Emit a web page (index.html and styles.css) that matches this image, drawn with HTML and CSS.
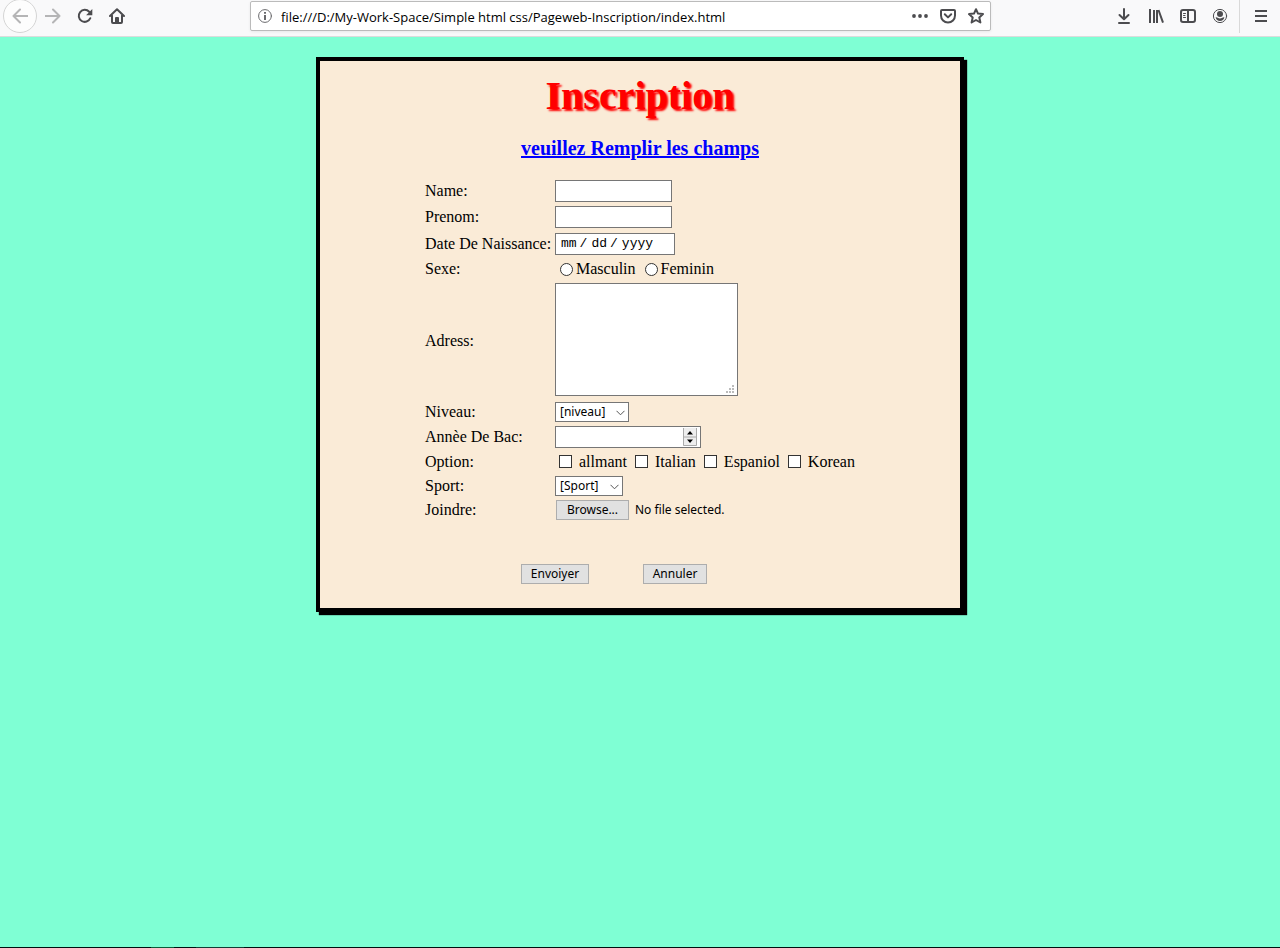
FILE: index.html
```html
<!DOCTYPE html>
<html lang="en">
<head>
<meta charset="utf-8">
<title>Inscription</title>
<link rel="stylesheet" href="styles.css">
</head>
<body>
<header class="toolbar">
  <nav class="nav-group">
    <button class="tool back" type="button" aria-label="Back"><svg width="16" height="16" viewBox="0 0 16 16"><path d="M15.500 8H1.500M8 1.500L1.500 8L8 14.500"/></svg></button>
    <button class="tool faded" type="button" aria-label="Forward"><svg width="16" height="16" viewBox="0 0 16 16"><path d="M.5 8H14.500M8 1.500L14.500 8L8 14.500"/></svg></button>
    <button class="tool" type="button" aria-label="Reload"><svg width="16" height="16" viewBox="0 0 16 16"><path d="M13.300 10.200A6 6 0 1 1 12.200 3.800"/><path class="solid" d="M15.300 1V7.200H9.100Z"/></svg></button>
    <button class="tool" type="button" aria-label="Home"><svg width="16" height="16" viewBox="0 0 16 16"><path d="M1 8L8 1.300L15 8M3 7.500V14Q3 15 4 15H12Q13 15 13 14V7.500"/><path class="solid" d="M6 15V10Q6 9 7 9H9Q10 9 10 10V15Z"/></svg></button>
  </nav>
  <div class="address">
    <svg class="info" width="14" height="14" viewBox="0 0 14 14"><circle cx="7" cy="7" r="6.400"/><path d="M7 6V11M7 3V4.700"/></svg>
    <input class="url" type="text" aria-label="Address" value="file:///D:/My-Work-Space/Simple html css/Pageweb-Inscription/index.html">
    <button class="mini" type="button" aria-label="Page actions"><svg width="16" height="16" viewBox="0 0 16 16"><g class="solid"><circle cx="2" cy="8" r="1.900"/><circle cx="8" cy="8" r="1.900"/><circle cx="14" cy="8" r="1.900"/></g></svg></button>
    <button class="mini" type="button" aria-label="Save to Pocket"><svg width="16" height="16" viewBox="0 0 16 16"><path d="M2 2H14Q15 2 15 3V7.500A7 7 0 0 1 1 7.500V3Q1 2 2 2ZM4.800 6.300L8 9.400L11.200 6.300"/></svg></button>
    <button class="mini" type="button" aria-label="Bookmark"><svg width="16" height="16" viewBox="0 0 16 16"><path d="M8 1.200L10 5.600L15 6.100L11.300 9.500L12.400 14.500L8 12L3.600 14.500L4.700 9.500L1 6.100L6 5.600Z"/></svg></button>
  </div>
  <div class="side-tools">
    <button class="tool" type="button" aria-label="Downloads"><svg width="16" height="16" viewBox="0 0 16 16"><path d="M8 1V11M3.500 7L8 11.300L12.500 7M3 15H13"/></svg></button>
    <button class="tool" type="button" aria-label="Library"><svg class="butt" width="16" height="16" viewBox="0 0 16 16"><path d="M2 1V15M6 2V15M9 2V15M10.500 2L15 14.700"/></svg></button>
    <button class="tool" type="button" aria-label="Sidebars"><svg width="16" height="16" viewBox="0 0 16 16"><rect x="1" y="2" width="14" height="12" rx="2"/><path d="M8 2V14"/><path class="thin" d="M3.500 5.500H5.500M3.500 7.500H5M3.500 9.500H5.500"/></svg></button>
    <button class="tool" type="button" aria-label="Account"><svg width="16" height="16" viewBox="0 0 16 16"><circle class="thin" cx="8" cy="8" r="6.600"/><circle class="solid" cx="8" cy="6" r="3"/><path class="solid" d="M3.600 9.200Q5 9 5.700 9.700Q8 11.200 10.300 9.700Q11 9 12.400 9.200Q11.500 13 8 13Q4.500 13 3.600 9.200Z"/></svg></button>
  </div>
  <div class="menu-zone">
    <button class="tool" type="button" aria-label="Menu"><svg class="butt" width="16" height="16" viewBox="0 0 16 16"><path d="M2 3H14M2 8H14M2 13H14"/></svg></button>
  </div>
</header>
<main class="page">
  <form class="card">
    <h1 class="title">Inscription</h1>
    <h2 class="subtitle">veuillez Remplir les champs</h2>
    <div class="fields">
      <label for="name">Name:</label>
      <div class="cell"><input class="box text" id="name" type="text"></div>
      <label for="prenom">Prenom:</label>
      <div class="cell"><input class="box text" id="prenom" type="text"></div>
      <label for="birth">Date De Naissance:</label>
      <div class="cell"><input class="box date" id="birth" type="date"></div>
      <span>Sexe:</span>
      <div class="cell radios">
        <label class="radio"><input type="radio" name="sexe">Masculin</label>
        <label class="radio"><input type="radio" name="sexe">Feminin</label>
      </div>
      <label for="adress">Adress:</label>
      <div class="cell area-cell"><textarea class="box area" id="adress"></textarea></div>
      <label for="niveau">Niveau:</label>
      <div class="cell"><span class="drop">
        <select class="box select level" id="niveau"><option>[niveau]</option></select>
        <svg class="chevron" width="9" height="6" viewBox="0 0 9 6"><path d="M.5 .8L4.500 4.800L8.500 .8"/></svg></span></div>
      <label for="bac">Annèe De Bac:</label>
      <div class="cell"><span class="drop"><input class="box number" id="bac" type="number">
        <svg class="spin" width="14" height="18" viewBox="0 0 14 18"><path class="spin-bg" d="M0 0H14V18H0Z"/><path class="spin-edge" d="M.5 0V17.500H13.500V0M0 9H14"/><path class="spin-arrow" d="M4 6.500L7 3L10 6.500ZM4 11.500L7 15L10 11.500Z"/></svg></span></div>
      <span>Option:</span>
      <div class="cell checks">
        <label class="check"><input type="checkbox">allmant</label>
        <label class="check"><input type="checkbox">Italian</label>
        <label class="check"><input type="checkbox">Espaniol</label>
        <label class="check"><input type="checkbox">Korean</label>
      </div>
      <label for="sport">Sport:</label>
      <div class="cell"><span class="drop">
        <select class="box select sport" id="sport"><option>[Sport]</option></select>
        <svg class="chevron" width="9" height="6" viewBox="0 0 9 6"><path d="M.5 .8L4.500 4.800L8.500 .8"/></svg></span></div>
      <label for="file">Joindre:</label>
      <div class="cell file"><input class="file-input" id="file" type="file"><label class="button browse" for="file">Browse...</label><span>No file selected.</span></div>
    </div>
    <div class="actions">
      <button class="button send" type="submit">Envoiyer</button>
      <button class="button cancel" type="reset">Annuler</button>
    </div>
  </form>
</main>
<footer class="edge"></footer>
</body>
</html>
```

FILE: styles.css
```css
* { box-sizing: border-box; }
body {
  margin: 0;
  min-height: 100vh;
  display: flex;
  flex-direction: column;
  background: #7fffd4;
  color: #000;
  font: 16px/18px "Liberation Serif", serif;
}
button, input, select, textarea { font: inherit; color: inherit; margin: 0; }

.toolbar {
  display: flex;
  height: 37px;
  background: #f9f9fa;
  border-bottom: 1px solid #dcdcdc;
}
.toolbar svg { fill: none; stroke: #4c4c4f; stroke-width: 2; stroke-linejoin: round; stroke-linecap: round; }
.toolbar .solid { fill: #4c4c4f; stroke: none; }
.toolbar .thin { stroke-width: 1; }
.toolbar .butt { stroke-linecap: butt; }
.nav-group { display: flex; width: 250px; padding-left: 3px; }
.tool {
  display: flex;
  align-items: center;
  justify-content: center;
  width: 32px;
  height: 32px;
  padding: 0;
  border: 0;
  background: none;
}
.back {
  width: 34px;
  height: 34px;
  margin-top: -1px;
  border: 1px solid #d5d5d5;
  border-radius: 50%;
  background: #fdfdfd;
}
.toolbar .back svg, .toolbar .faded svg { stroke: #b5b5b6; }
.address {
  flex: 1;
  display: flex;
  align-items: center;
  gap: 12px;
  height: 30px;
  margin-top: 1px;
  padding: 0 6px 0 7px;
  background: #fff;
  border: 1px solid #bbb;
  border-radius: 2px;
  box-shadow: 0 1px 3px #0001;
}
.toolbar .info { stroke: #6a6a6d; stroke-width: 1; flex: none; }
.info path { stroke-width: 2; stroke-linecap: butt; }
.url {
  flex: 1;
  min-width: 0;
  margin-left: -3px;
  padding: 2px 0 0;
  border: 0;
  font: 13px/20px "Open Sans", sans-serif;
  outline: 0;
}
.mini { display: flex; padding: 0; border: 0; background: none; }
.side-tools { display: flex; margin-left: 117px; }
.menu-zone {
  display: flex;
  width: 41px;
  height: 33px;
  margin-left: 3px;
  padding-left: 5px;
  border-left: 1px solid #d9d9d9;
}

.page { flex: 1; padding: 20px; }
.card {
  width: 100%;
  max-width: 648px;
  margin: 0 auto;
  padding: 13px 24px 24px;
  border: 4px solid #000;
  background: #faebd7;
  box-shadow: 3px 3px 1px #000;
}
.title {
  margin: 0;
  text-align: center;
  color: #f00;
  font-size: 40px;
  line-height: 44px;
  text-shadow: 2px 2px 2px #f00;
}
.subtitle {
  margin: 19px 0 18px;
  text-align: center;
  color: #00f;
  font-size: 20px;
  line-height: 23px;
  text-decoration: underline;
}
.fields {
  display: grid;
  grid-template-columns: 130px 1fr;
  grid-template-rows: 26px 26px 27px 24px 119px 24px 26px 23px 25px 24px;
  align-items: center;
  padding-left: 81px;
}
.cell { display: flex; align-items: center; }
.box { display: block; height: 22px; border: 1px solid #767676; border-radius: 0; background: #fff; }
.text { width: 117px; }
.date { width: 120px; padding: 0 5px; font: 13px/18px "Liberation Mono", monospace; }
.date::-webkit-calendar-picker-indicator { display: none; }
.date::-webkit-datetime-edit-fields-wrapper { padding: 0; }
.date::-webkit-datetime-edit-text { padding: 0 4px 0 3px; }
.date::-webkit-datetime-edit-month-field,
.date::-webkit-datetime-edit-day-field,
.date::-webkit-datetime-edit-year-field { padding: 0; }
.radios { gap: 9px; padding-left: 5px; }
.radio { display: flex; align-items: center; gap: 3px; }
.radio input, .check input {
  appearance: none;
  width: 13px;
  height: 13px;
  border: 1px solid #333;
  background: #fff;
}
.radio input { border-radius: 50%; }
.area-cell { align-self: start; padding-top: 2px; }
.area { width: 183px; height: 113px; }
.area::-webkit-resizer {
  background:
    linear-gradient(#bbb, #bbb) 10px 5px / 2px 2px no-repeat,
    linear-gradient(#bbb, #bbb) 7px 8px / 2px 2px no-repeat,
    linear-gradient(#bbb, #bbb) 10px 8px / 2px 2px no-repeat,
    linear-gradient(#bbb, #bbb) 4px 11px / 2px 2px no-repeat,
    linear-gradient(#bbb, #bbb) 7px 11px / 2px 2px no-repeat,
    linear-gradient(#bbb, #bbb) 10px 11px / 2px 2px no-repeat;
}
.drop { position: relative; display: block; }
.select { appearance: none; height: 20px; padding: 0 4px; font: 12px/18px "Noto Sans", sans-serif; }
.level { width: 74px; }
.sport { width: 68px; }
.chevron { position: absolute; right: 4px; top: 8px; fill: none; stroke: #555; pointer-events: none; }
.number { width: 146px; appearance: textfield; }
.spin { position: absolute; right: 4px; top: 2px; pointer-events: none; }
.spin-bg { fill: #eee; }
.spin-edge { fill: none; stroke: #aaa; }
.spin-arrow { fill: #000; }
.checks { gap: 8px; padding-left: 4px; }
.check { display: flex; align-items: center; gap: 7px; }
.button {
  display: flex;
  align-items: center;
  justify-content: center;
  height: 20px;
  padding: 0;
  border: 1px solid #adadad;
  background: #e1e1e1;
  font: 12px/18px "Noto Sans", sans-serif;
}
.file { gap: 6px; padding-left: 1px; font: 12px/18px "Noto Sans", sans-serif; }
.file-input { position: absolute; width: 1px; height: 1px; opacity: 0; }
.browse { width: 73px; }
.actions { display: flex; gap: 54px; margin-top: 42px; padding-left: 177px; }
.send { width: 68px; }
.cancel { width: 64px; }
.edge {
  height: 1px;
  background: linear-gradient(90deg, #001010 151px, #0b5a38 151px 174px, #001010 174px 196px, #123c34 196px 244px, #001010 244px);
}
```
